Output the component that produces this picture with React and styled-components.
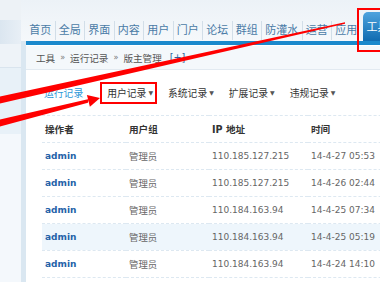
import styled, { createGlobalStyle } from "styled-components";

const GlobalStyle = createGlobalStyle`
  html, body {
    margin: 0;
    padding: 0;
    background: #f3f7fb;
  }
  body {
    font-family: "DejaVu Sans", "Noto Sans CJK SC", sans-serif;
    overflow: hidden;
  }
`;

const Page = styled.div`
  position: relative;
  width: 380px;
  height: 282px;
  overflow: hidden;
  display: flex;
  background: #f3f7fb;
`;

const Sidebar = styled.aside`
  width: 21px;
  flex-shrink: 0;
  display: flex;
  flex-direction: column;
  background: #f4f8fb;
`;

const SideBlock = styled.div`
  height: ${(p) => p.$h}px;
  background: ${(p) => p.$bg};
  border-bottom: ${(p) => (p.$line ? "1px solid #d9e4ee" : "none")};
`;

const Main = styled.div`
  flex: 1;
  min-width: 0;
  display: flex;
  flex-direction: column;
`;

const TopNav = styled.nav`
  height: 41px;
  flex-shrink: 0;
  display: flex;
  align-items: flex-end;
  padding-left: 5px;
  background: linear-gradient(#ecf2f7, #f5f8fb);
`;

const NavItem = styled.a`
  position: relative;
  flex-shrink: 0;
  height: ${(p) => (p.$active ? 29 : 19)}px;
  line-height: ${(p) => (p.$active ? 31 : 19)}px;
  margin-bottom: ${(p) => (p.$active ? 0 : 1)}px;
  margin-left: ${(p) => (p.$active ? 2 : 0)}px;
  padding: 0 ${(p) => (p.$active ? 4 : 3.25)}px;
  font-size: 11px;
  white-space: nowrap;
  color: ${(p) => (p.$active ? "#fff" : "#4a7ba6")};
  background: ${(p) =>
    p.$active ? "linear-gradient(#4ea3de, #106bb0)" : "transparent"};
  border-radius: ${(p) => (p.$active ? "5px 5px 0 0" : "0")};
  border-left: ${(p) =>
    p.$first || p.$active ? "none" : "1px solid #d2dee8"};

  &::after {
    content: "";
    display: ${(p) => (p.$marked ? "block" : "none")};
    position: absolute;
    top: -4px;
    left: -6px;
    right: -20px;
    bottom: -11px;
    border: 2px solid #f00;
  }
`;

const Panel = styled.section`
  flex: 1;
  display: flex;
  flex-direction: column;
  background: #fff;
  border-left: 5px solid #dae7f1;
`;

const BlueBar = styled.div`
  height: 4px;
  background: #1b89cc;
  border-bottom: 1px solid #fff;
`;

const Crumb = styled.div`
  height: 23px;
  display: flex;
  align-items: center;
  gap: 5px;
  padding-left: 10px;
  font-size: 9.6px;
  color: #555;
  background: #f4f8fb;
  border-bottom: 1px solid #e2eaf1;
`;

const CrumbSep = styled.span`
  font-size: 8px;
  color: #777;
`;

const CrumbAdd = styled.span`
  color: #2d5f9c;
  margin-left: 3px;
`;

const Content = styled.div`
  padding-left: 16px;
`;

const Tabs = styled.div`
  height: 45px;
  display: flex;
  align-items: center;
  gap: 4px;
`;

const Tab = styled.span`
  display: flex;
  align-items: center;
  height: 18px;
  padding: 0 2px 0 ${(p) => (p.$current ? 0 : 5)}px;
  margin-right: ${(p) => (p.$current ? 9 : 0)}px;
  border: 2px solid ${(p) => (p.$marked ? "#f00" : "transparent")};
  font-size: 9.8px;
  white-space: nowrap;
  color: ${(p) => (p.$current ? "#2b98d8" : "#333")};
`;

const Caret = styled.span`
  font-size: 6px;
  margin-left: 2px;
  color: #555;
`;

const Table = styled.table`
  width: 380px;
  border-collapse: collapse;
  table-layout: fixed;
`;

const Row = styled.tr`
  height: 27px;
  background: ${(p) => (p.$hover ? "#eef6fc" : "transparent")};
  border-top: 1px dashed #dde8f1;
  border-bottom: 1px dashed #dde8f1;
`;

const Cell = styled.td`
  padding: 0 0 0 3px;
  white-space: nowrap;
  overflow: hidden;
  font-size: ${(p) => (p.$cjk ? 9.4 : 9)}px;
  color: #666;
`;

const HeadCell = styled.th`
  padding: 0 0 0 3px;
  text-align: left;
  font-size: 9.6px;
  font-weight: bold;
  white-space: nowrap;
  color: #333;
`;

const UserName = styled.a`
  font-size: 9px;
  font-weight: bold;
  color: #2462a8;
`;

const Overlay = styled.svg`
  position: absolute;
  left: 0;
  top: 0;
  pointer-events: none;
`;

const navItems = ["首页", "全局", "界面", "内容", "用户", "门户", "论坛", "群组", "防灌水", "运营", "应用"];

const logs = [
  { ip: "110.185.127.215", time: "14-4-27 05:53" },
  { ip: "110.185.127.215", time: "14-4-26 02:44" },
  { ip: "110.184.163.94", time: "14-4-25 07:34" },
  { ip: "110.184.163.94", time: "14-4-25 05:19", hover: true },
  { ip: "110.184.163.94", time: "14-4-24 14:10" },
];

export default function App() {
  return (
    <Page>
      <GlobalStyle />
      <Sidebar>
        <SideBlock $h={20} $bg="#edf2f6" />
        <SideBlock $h={24} $bg="linear-gradient(90deg, #dbe6f0, #e8eff6)" />
        <SideBlock $h={23} $bg="#eef3f8" $line />
        <SideBlock $h={66} $bg="#e8f1f8" />
        <SideBlock $h={148} $bg="#f4f8fc" />
      </Sidebar>
      <Main>
        <TopNav>
          {navItems.map((n, i) => (
            <NavItem key={n} $first={i === 0}>
              {n}
            </NavItem>
          ))}
          <NavItem $active $marked>
            工具
          </NavItem>
        </TopNav>
        <Panel>
          <BlueBar />
          <Crumb>
            <span>工具</span>
            <CrumbSep>»</CrumbSep>
            <span>运行记录</span>
            <CrumbSep>»</CrumbSep>
            <span>版主管理</span>
            <CrumbAdd>[+]</CrumbAdd>
          </Crumb>
          <Content>
            <Tabs>
              <Tab $current>运行记录</Tab>
              <Tab $marked>
                用户记录<Caret>▼</Caret>
              </Tab>
              <Tab>
                系统记录<Caret>▼</Caret>
              </Tab>
              <Tab>
                扩展记录<Caret>▼</Caret>
              </Tab>
              <Tab>
                违规记录<Caret>▼</Caret>
              </Tab>
            </Tabs>
            <Table>
              <colgroup>
                <col style={{ width: 84 }} />
                <col style={{ width: 83 }} />
                <col style={{ width: 99 }} />
                <col />
              </colgroup>
              <thead>
                <Row>
                  <HeadCell>操作者</HeadCell>
                  <HeadCell>用户组</HeadCell>
                  <HeadCell>IP 地址</HeadCell>
                  <HeadCell>时间</HeadCell>
                </Row>
              </thead>
              <tbody>
                {logs.map((l, i) => (
                  <Row key={i} $hover={l.hover}>
                    <Cell>
                      <UserName>admin</UserName>
                    </Cell>
                    <Cell $cjk>管理员</Cell>
                    <Cell>{l.ip}</Cell>
                    <Cell>{l.time}</Cell>
                  </Row>
                ))}
              </tbody>
            </Table>
          </Content>
        </Panel>
      </Main>
      <Overlay width="380" height="282" viewBox="0 0 380 282">
        <polygon points="0,96.5 345,22.3 345,23.7 0,103.5" fill="#f00" />
        <polygon points="0,119.5 88.9,99 87.9,102.8 0,126.5" fill="#f00" />
        <polygon points="100,98 86.9,95.1 89.9,106.7" fill="#f00" />
      </Overlay>
    </Page>
  );
}
